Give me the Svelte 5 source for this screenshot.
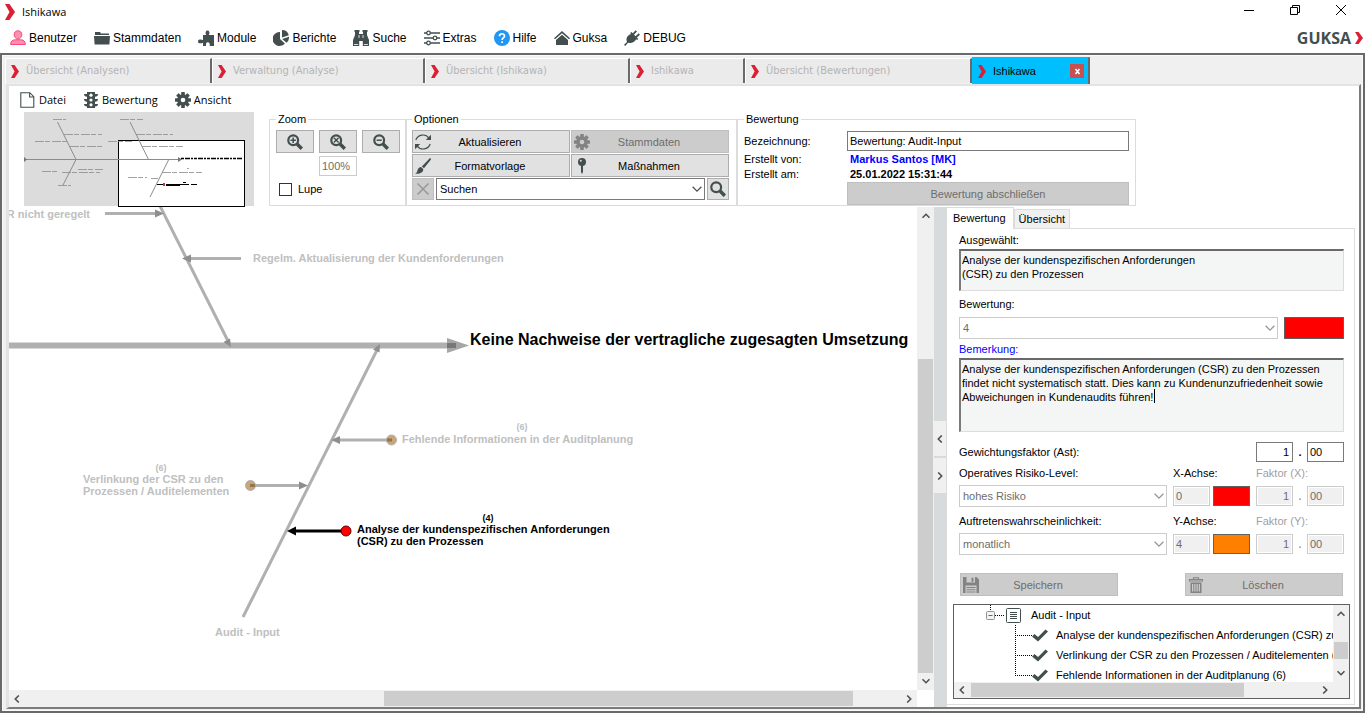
<script>
  const mainMenu = [
    { icon: 'user', label: 'Benutzer' },
    { icon: 'folder', label: 'Stammdaten' },
    { icon: 'puzzle', label: 'Module' },
    { icon: 'pie', label: 'Berichte' },
    { icon: 'binoculars', label: 'Suche' },
    { icon: 'sliders', label: 'Extras' },
    { icon: 'help', label: 'Hilfe' },
    { icon: 'house', label: 'Guksa' },
    { icon: 'plug', label: 'DEBUG' }
  ];

  const tabs = [
    { label: 'Übersicht (Analysen)', width: 207 },
    { label: 'Verwaltung (Analyse)', width: 213 },
    { label: 'Übersicht (Ishikawa)', width: 205 },
    { label: 'Ishikawa', width: 115 },
    { label: 'Übersicht (Bewertungen)', width: 227 },
    { label: 'Ishikawa', width: 118, active: true }
  ];

  const pageMenu = [
    { icon: 'file', label: 'Datei' },
    { icon: 'traffic', label: 'Bewertung' },
    { icon: 'gear', label: 'Ansicht' }
  ];

  const axes = [
    { id: 'x', label: 'Operatives Risiko-Level:', level: 'hohes Risiko', axis: 'X-Achse:', value: '0', color: '#ff0000', factor: 'Faktor (X):' },
    { id: 'y', label: 'Auftretenswahrscheinlichkeit:', level: 'monatlich', axis: 'Y-Achse:', value: '4', color: '#ff8000', factor: 'Faktor (Y):' }
  ];

  const leaves = [
    'Analyse der kundenspezifischen Anforderungen (CSR) zu den Prozessen (4)',
    'Verlinkung der CSR zu den Prozessen / Auditelementen (6)',
    'Fehlende Informationen in der Auditplanung (6)'
  ];

  let name = $state('Bewertung: Audit-Input');
  let selected = $state('Analyse der kundenspezifischen Anforderungen\n(CSR) zu den Prozessen');
  let remark = $state('Analyse der kundenspezifischen Anforderungen (CSR) zu den Prozessen findet nicht systematisch statt. Dies kann zu Kundenunzufriedenheit sowie Abweichungen in Kundenaudits führen!');
</script>

{#snippet mark(w, h)}
  <svg width={w} height={h} viewBox="0 0 10 16" preserveAspectRatio="none" aria-hidden="true">
    <path d="M0 0H4.500L10 8 4.500 16H0L4.500 8Z" fill="#dc1f35" />
  </svg>
{/snippet}

{#snippet chevron(dir)}
  <svg class="chev" width="8" height="8" viewBox="0 0 8 8" aria-hidden="true">
    {#if dir === 'up'}<path d="M.5 5.800L4 2.300 7.500 5.800" />
    {:else if dir === 'down'}<path d="M.5 2.200L4 5.700 7.500 2.200" />
    {:else if dir === 'left'}<path d="M5.800 .5L2.300 4 5.800 7.500" />
    {:else}<path d="M2.200 .5L5.700 4 2.200 7.500" />{/if}
  </svg>
{/snippet}

{#snippet gearShape()}
  <g fill="currentColor">
    {#each [0, 45, 90, 135] as a}
      <rect x="6.200" y="0" width="3.600" height="16" rx=".6" transform="rotate({a} 8 8)" />
    {/each}
    <circle cx="8" cy="8" r="5.800" />
  </g>
  <circle cx="8" cy="8" r="2.300" fill="var(--hole, #fff)" />
{/snippet}

{#snippet icon(kind)}
  <svg class="icon" width="16" height="16" viewBox="0 0 16 16" aria-hidden="true">
    {#if kind === 'user'}
      <path d="M8 .8c2.300 0 3.800 1.600 3.800 3.800S10.200 9 8 9 4.200 7 4.200 4.600 5.700.8 8 .8ZM.6 14.500c0-3.400 2-4.700 5-4.700h4.800c3 0 5 1.300 5 4.700Z" fill="#ff8fae" stroke="#f8487c" />
    {:else if kind === 'folder'}
      <path d="M1 2h5l1 1.500h8V5H1ZM0 6h16l-.6 8.500H.6Z" fill="currentColor" />
    {:else if kind === 'puzzle'}
      <path d="M5 5h3.200C7 2.800 7.600.4 9.500.4s2.600 2.400 1.300 4.600H16v11h-4.400c.8-2-.5-3.700-1.800-3.700S7.400 14 8.200 16H5v-3.300C3 13.700 0 13.700 0 11.400S3 9 5 10.100Z" fill="currentColor" />
    {:else if kind === 'pie'}
      <path d="M7 2v7l4.900 4.500A7 7 0 1 1 7 2ZM9 0a7 7 0 0 1 6.800 5.200L9 7.500ZM9.200 9 16 6.800a7 7 0 0 1-2.500 6Z" fill="currentColor" />
    {:else if kind === 'binoculars'}
      <path d="M1.500 0h5v2H6v2h4V2h-.5V0h5v2H14v3l2 5v6H9.800v-5H6.200v5H0v-6l2-5V2h-.5Z" fill="currentColor" />
      <path d="M1 14.500h4.200M10.800 14.500H15M6 5v3M10 5v3" stroke="#fff" stroke-width=".8" />
    {:else if kind === 'sliders'}
      <path d="M0 3h16M0 8h16M0 13h16" stroke="currentColor" stroke-width="1.600" />
      <g fill="#fff" stroke="currentColor" stroke-width="1.300"><circle cx="4.500" cy="3" r="1.800" /><circle cx="11" cy="8" r="1.800" /><circle cx="4.500" cy="13" r="1.800" /></g>
    {:else if kind === 'help'}
      <circle cx="8" cy="8" r="8" fill="#2196f3" />
      <path d="M5.500 6.200C5.500 3 10.500 3 10.500 6c0 1.800-2.400 1.800-2.400 4M8.100 11.300v1.700" fill="none" stroke="#fff" stroke-width="1.700" />
    {:else if kind === 'house'}
      <path d="M0 8.200 8 1l8 7.200-1 1-7-6-7 6ZM8 4.800l6 5.200v5H2v-5Z" fill="currentColor" />
    {:else if kind === 'plug'}
      <path d="M0 14.800 3 12c-1.500-4 .6-6.600 4-8l-.8-1L7.500 2l6.800 7-1.300 1-.9-.8c-1.800 3.300-4.700 4.500-8 3.500L1.200 16Z" fill="currentColor" />
      <path d="M9 4.300 12.300.8M11.800 7.300 15.300 4" stroke="currentColor" stroke-width="1.800" />
    {:else if kind === 'file'}
      <path d="M.8.7h9l4 4v10.600H.8ZM9.600.7V5h4.200" fill="#fff" stroke="currentColor" stroke-width="1.100" />
    {:else if kind === 'traffic'}
      <path d="M4 0h8v2h3c0 1.700-1 2.500-3 2.800V7h3c0 1.700-1 2.500-3 2.800V12h3c0 1.500-1 2.300-3 2.500V16H4v-1.500c-2-.2-3-1-3-2.500h3V9.800C2 9.500 1 8.700 1 7h3V4.800C2 4.500 1 3.700 1 2h3Z" fill="currentColor" />
      <g fill="#fff"><circle cx="8" cy="3.200" r="1.600" /><circle cx="8" cy="8" r="1.600" /><circle cx="8" cy="12.800" r="1.600" /></g>
    {:else if kind === 'gear'}
      {@render gearShape()}
    {:else if kind === 'refresh'}
      <g fill="none" stroke="currentColor" stroke-width="1.200"><path d="M.8 6A7.500 7.500 0 0 1 14 4.200M15.200 10A7.500 7.500 0 0 1 2 11.800" /></g>
      <path d="M16 .8V6H10.800ZM0 15.200V10H5.200Z" fill="currentColor" />
    {:else if kind === 'brush'}
      <path d="M15 0c1.200.4 1.200 1 .6 2L9 10.200 6.800 8.400ZM6 9.100l2.200 1.900c.4 3-2.700 5.300-8.200 4.700 2-.7 2-1.800 2.600-3.700C3.100 10.300 4.300 9.300 6 9.100Z" fill="currentColor" />
    {:else if kind === 'pin'}
      <circle cx="8" cy="4" r="4" fill="currentColor" /><path d="M7 7h2v7l-1 2-1-2Z" fill="currentColor" /><circle cx="6.800" cy="2.700" r="1" fill="#d8dada" />
    {:else if kind === 'cross'}
      <path d="M2.500 2.500l11 11M13.500 2.500l-11 11" stroke="#999" stroke-width="1.600" />
    {:else if kind === 'save'}
      <path d="M0 0h13.500L16 2.500V16H0Z" fill="currentColor" /><path d="M3.500 0h8.500v5.500H3.500ZM2.500 8.500h11V16h-11Z" fill="#ccc" /><path d="M8.500.8h2v4h-2ZM3.500 10h9v1h-9ZM3.500 12.200h9v1h-9ZM3.500 14.400h9v1h-9Z" fill="currentColor" />
    {:else if kind === 'trash'}
      <path d="M1.500 2.500h13V4h-13ZM5.500 2.500V.7h5v1.800" fill="none" stroke="currentColor" stroke-width="1.100" /><path d="M2.500 5.500h11V16h-11Z" fill="currentColor" /><path d="M4.700 7v7.500M6.900 7v7.500M9.100 7v7.500M11.300 7v7.500" stroke="#ddd" stroke-width="1" />
    {:else}
      <circle cx="6.200" cy="6.200" r="4.900" fill="none" stroke="currentColor" stroke-width="2.200" />
      <path d="M9.800 9.800 14.800 14.800" stroke="currentColor" stroke-width="3.400" />
      {#if kind === 'plus'}<path d="M3.500 6.200h5.400M6.200 3.500v5.400" stroke="currentColor" stroke-width="1.500" />
      {:else if kind === 'fit'}<path d="M3.800 3.800l4.800 4.800M8.600 3.800l-4.800 4.800" stroke="currentColor" stroke-width="1.400" />
      {:else if kind === 'minus'}<path d="M3.600 6.200h5.200" stroke="currentColor" stroke-width="1.500" />{/if}
    {/if}
  </svg>
{/snippet}

<div class="app">
  <header class="titlebar">
    {@render mark(10, 16)}
    <h1>Ishikawa</h1>
    <div class="window-buttons">
      <button aria-label="Minimieren"><svg width="12" height="12"><path d="M1 6.500h10" /></svg></button>
      <button aria-label="Wiederherstellen"><svg width="12" height="12"><path d="M1.500 3.500h7v7h-7ZM3.500 3.500v-2h7v7h-2" /></svg></button>
      <button aria-label="Schließen"><svg width="12" height="12"><path d="M1 1l10 10M11 1L1 11" /></svg></button>
    </div>
  </header>

  <nav class="menu">
    {#each mainMenu as item}
      <button>{@render icon(item.icon)}{item.label}</button>
    {/each}
    <span class="brand">GUKSA {@render mark(8, 12)}</span>
  </nav>

  <main class="frame">
    <div class="tabs" role="tablist">
      {#each tabs as tab}
        <div class="tab" class:active={tab.active} style="width: {tab.width}px">
          <button role="tab" aria-selected={!!tab.active}>{@render mark(8, 13)}{tab.label}</button>
          {#if tab.active}<button class="close" aria-label="Tab schließen"><svg width="7" height="7" viewBox="0 0 7 7"><path d="M1.500 1l4 5M5.500 1l-4 5" stroke="#fff" stroke-width="1.600" /></svg></button>{/if}
        </div>
      {/each}
    </div>

    <div class="page">
      <nav class="menu page-menu">
        {#each pageMenu as item}
          <button>{@render icon(item.icon)}{item.label}</button>
        {/each}
      </nav>

      <div class="toolbar">
        <svg class="minimap" width="230" height="95" viewBox="0 0 230 95" role="img" aria-label="Navigator">
          <rect width="230" height="94" fill="#dcdcdc" />
          <rect x="94.500" y="28.500" width="126" height="66" fill="#fff" stroke="#000" />
          <g fill="none" stroke="#8c8c8c">
            <path d="M0 47.500H156M33.500 10 52 47.500 39 73M106 10l18.500 37.500M144.500 48 126 85" />
            <g stroke-dasharray="9 1 5 2" opacity=".8">
              <path d="M29 7.500h13M96 7.500h23M40 22.500h38M11 29.500h32M46 34.500h34M112 22.500h37M84 29.500h24M118 34.500h41M18 59.500h15M54 57.500h25M38 60.500h38M34 73.500h13M104 65.500h19M127 66.500h7M138 60.500h40M163 56.500h2" />
            </g>
          </g>
          <path d="M0 45l3 2.500L0 50ZM154 45l4 2.500-4 2.500Z" fill="#777" />
          <path d="M157 46.500h61" stroke="#000" stroke-width="1.300" stroke-dasharray="3 1 5 1 2 1" />
          <path d="M133 72.500h8M142 72.500h23M142 73.500h14M167 72.500h6" stroke="#000" stroke-width="1.200" />
          <path d="M159 70.500h3" stroke="#000" />
          <rect x="139" y="71" width="2" height="3" fill="#d03030" />
        </svg>

        <fieldset class="zoom">
          <legend>Zoom</legend>
          <div class="zoom-grid">
            <button class="btn" aria-label="Vergrößern">{@render icon('plus')}</button>
            <button class="btn" aria-label="Einpassen">{@render icon('fit')}</button>
            <button class="btn" aria-label="Verkleinern">{@render icon('minus')}</button>
            <input class="percent" aria-label="Zoomstufe" value="100%" disabled />
          </div>
          <label class="check"><input type="checkbox" />Lupe</label>
        </fieldset>

        <fieldset class="options">
          <legend>Optionen</legend>
          <div class="option-grid">
            <button class="btn">{@render icon('refresh')}<span>Aktualisieren</span></button>
            <button class="btn" disabled>{@render icon('gear')}<span>Stammdaten</span></button>
            <button class="btn">{@render icon('brush')}<span>Formatvorlage</span></button>
            <button class="btn">{@render icon('pin')}<span>Maßnahmen</span></button>
          </div>
          <div class="search">
            <button class="btn" aria-label="Suche leeren" disabled>{@render icon('cross')}</button>
            <div class="select"><select aria-label="Suchen"><option>Suchen</option></select>{@render chevron('down')}</div>
            <button class="btn" aria-label="Suche starten">{@render icon('search')}</button>
          </div>
        </fieldset>

        <fieldset class="rating">
          <legend>Bewertung</legend>
          <div class="rating-grid">
            <label for="name">Bezeichnung:</label>
            <input id="name" bind:value={name} />
            <span>Erstellt von:</span><strong class="blue">Markus Santos [MK]</strong>
            <span>Erstellt am:</span><strong>25.01.2022 15:31:44</strong>
            <button class="btn" disabled>Bewertung abschließen</button>
          </div>
        </fieldset>
      </div>

      <div class="work">
        <section class="canvas">
          <div class="view">
            <svg width="908" height="482" viewBox="9 207 908 482" role="img" aria-label="Ishikawa-Diagramm">
              <g stroke="#b0b0b0" stroke-width="3" fill="none">
                <path d="M9 345.500H456" stroke-width="6" />
                <path d="M160 206 229 343M243 617 378 348" />
                <path d="M105 213.500h52M188 258.500h53M338 440h52M251 485.500h50" />
              </g>
              <path d="M447 338l22 7.500-22 7.500Z" fill="#a6a6a6" />
              <path d="M447 343h9v5h-9Z" fill="#777" />
              <g fill="#8e8e8e">
                <path d="M155 209.500l9 4-9 4ZM191 254.500l-9 4 9 4ZM340 436l-9 4 9 4ZM299 481.500l9 4-9 4ZM231 347l-7.500-5 6.500-3.500ZM380 344l-7 5.500 6.500 3Z" />
              </g>
              <g stroke="#b0b0b0" fill="#c9a673"><circle cx="391.500" cy="440" r="5" /><circle cx="250.500" cy="485.500" r="5" /></g>
              <path d="M387 440h5M250 485.500h5" stroke="#8f7550" stroke-width="3" />
              <path d="M292 531h50" stroke="#000" stroke-width="3" />
              <path d="M296 526.500l-9 4.500 9 4.500Z" />
              <circle cx="346" cy="531" r="5" fill="#f00" stroke="#600" />
              <g class="muted">
                <text x="90" y="218" text-anchor="end">CSR nicht geregelt</text>
                <text x="253" y="262">Regelm. Aktualisierung der Kundenforderungen</text>
                <text x="402" y="443">Fehlende Informationen in der Auditplanung</text>
                <text x="83" y="483">Verlinkung der CSR zu den</text>
                <text x="83" y="495">Prozessen / Auditelementen</text>
                <text x="215" y="636">Audit - Input</text>
                <text class="score" x="522" y="430">(6)</text>
                <text class="score" x="161" y="471">(6)</text>
              </g>
              <text class="score" x="488" y="521">(4)</text>
              <text x="357" y="533">Analyse der kundenspezifischen Anforderungen</text>
              <text x="357" y="545">(CSR) zu den Prozessen</text>
              <text class="effect" x="470" y="345">Keine Nachweise der vertragliche zugesagten Umsetzung</text>
            </svg>
          </div>
          <div class="bar vertical">{@render chevron('up')}<i style="top: 31.5%; height: 65%"></i>{@render chevron('down')}</div>
          <div class="bar horizontal">{@render chevron('left')}<i style="left: 41.3%; width: 51.7%"></i>{@render chevron('right')}</div>
        </section>

        <div class="splitter">
          <button aria-label="Nach links">{@render chevron('left')}</button>
          <button aria-label="Nach rechts">{@render chevron('right')}</button>
        </div>

        <aside>
          <div class="side-tabs" role="tablist">
            <button role="tab" aria-selected="true">Bewertung</button>
            <button role="tab" aria-selected="false">Übersicht</button>
          </div>
          <div class="side">
            <form>
              <label for="selected">Ausgewählt:</label>
              <textarea id="selected" class="short" readonly bind:value={selected}></textarea>
              <label for="grade" class="spaced">Bewertung:</label>
              <div class="line">
                <div class="select"><select id="grade" disabled><option>4</option></select>{@render chevron('down')}</div>
                <span class="swatch wide" style="background: #ff0000"></span>
              </div>
              <label for="remark" class="blue">Bemerkung:</label>
              <div class="remark"><textarea id="remark" class="tall" bind:value={remark}></textarea><span class="caret"></span></div>
              <div class="line weight">
                <label for="weight">Gewichtungsfaktor (Ast):</label>
                <input id="weight" class="num right" value="1" /><b>.</b><input class="num" aria-label="Nachkommastellen" value="00" />
              </div>
              {#each axes as a}
                <div class="axis">
                  <label for="level-{a.id}">{a.label}</label>
                  <label for="axis-{a.id}">{a.axis}</label>
                  <label for="factor-{a.id}" class="off">{a.factor}</label>
                  <div class="select"><select id="level-{a.id}" disabled><option>{a.level}</option></select>{@render chevron('down')}</div>
                  <div class="pair"><input id="axis-{a.id}" class="num" value={a.value} disabled /><span class="swatch" style="background: {a.color}"></span></div>
                  <div class="pair"><input id="factor-{a.id}" class="num right" value="1" disabled /><b class="off">.</b><input class="num" aria-label="Nachkommastellen" value="00" disabled /></div>
                </div>
              {/each}
              <div class="actions">
                <button type="button" class="btn" disabled>{@render icon('save')}<span>Speichern</span></button>
                <button type="button" class="btn" disabled>{@render icon('trash')}<span>Löschen</span></button>
              </div>
            </form>

            <div class="tree">
              <ul>
                <li class="root">
                  <svg width="42" height="20" viewBox="0 0 42 20" aria-hidden="true">
                    <path d="M5.500 0v6M10 10.500h10" stroke="#000" stroke-dasharray="1 1" />
                    <rect x="1.500" y="6.500" width="8" height="8" rx="1" fill="#f2f5f8" stroke="#919191" /><path d="M3.500 10.500h4" stroke="#4b63a7" />
                    <rect x="21.500" y="3.500" width="14" height="14" rx="1" fill="#fff" stroke="#434f4f" /><path d="M25 7.500h7M25 9.500h7M25 11.500h7M25 13.500h7" stroke="#434f4f" />
                  </svg>Audit - Input
                </li>
                {#each leaves as leaf, i}
                  <li>
                    <svg width="36" height="20" viewBox="0 0 36 20" aria-hidden="true">
                      <path d={i === leaves.length - 1 ? 'M.5 0v10M0 10.500h18' : 'M.5 0v20M0 10.500h18'} stroke="#000" stroke-dasharray="1 1" />
                      <path d="M17 11.500l2.500-2.500 3.500 3L30.500 4.500 33 6.500 23 16.500Z" fill="#434f4f" />
                    </svg>{leaf}
                  </li>
                {/each}
              </ul>
              <div class="bar vertical">{@render chevron('up')}<i style="top: 48%; height: 22%"></i>{@render chevron('down')}</div>
              <div class="bar horizontal">{@render chevron('left')}<i style="left: 4.500%; width: 72%"></i>{@render chevron('right')}</div>
            </div>
          </div>
        </aside>
      </div>
    </div>
  </main>
</div>

<style>
  :global(body) { margin: 0; background: #fff; }
  .app, .app * { box-sizing: border-box; }
  .app { height: 100vh; min-height: 700px; display: flex; flex-direction: column; overflow: hidden; font: 11px/14px "Liberation Sans", Arial, sans-serif; color: #000; }
  button, input, select, textarea { font: inherit; color: inherit; margin: 0; border-radius: 0; }
  button { background: none; border: 0; padding: 0; }
  svg { display: block; flex: none; }
  .icon { color: #434f4f; }
  .chev path { fill: none; stroke: #505050; stroke-width: 1.6; }
  .blue { color: #00f; }
  .off { color: #a0a0a0; }

  .titlebar { flex: none; height: 24px; display: flex; align-items: center; gap: 7px; padding: 0 19px 0 5px; }
  h1 { margin: 0; font: 11px/16px "Open Sans", sans-serif; }
  .window-buttons { margin-left: auto; display: flex; gap: 34px; padding-bottom: 4px; }
  .window-buttons path { fill: none; stroke: #000; }

  .menu { flex: none; display: flex; align-items: center; gap: 17px; height: 28px; padding: 0 3px 0 10px; font-size: 12px; }
  .menu button { display: flex; align-items: center; gap: 3px; }
  .brand { margin-left: auto; display: flex; align-items: center; gap: 4px; font: 700 16px/18px "Open Sans", sans-serif; color: #434f4f; }

  .frame { flex: 1; min-height: 0; display: flex; flex-direction: column; margin: 1px 1px 0 0; padding: 2px 2px 2px 3px; border: 2px solid #696969; background: #f0f0f0; box-shadow: inset 0 0 0 1px #fafafa; }
  .tabs { flex: none; display: flex; height: 27px; }
  .tab { display: flex; align-items: center; height: 25px; margin-top: 1px; border-right: 2px solid #696969; background: #ebebeb; border-left: 1px solid #fff; border-top: 1px solid #fff; color: #b4b4b4; font: 11px/14px "DejaVu Sans Condensed", "DejaVu Sans", sans-serif; font-stretch: condensed; }
  .tab button { display: flex; align-items: center; gap: 7px; margin-left: 5px; }
  .tab.active { background: #00bfff; color: #000; height: 27px; margin-top: 0; border-left-color: #00bfff; border-top-color: #00bfff; font: 11px/14px "Liberation Sans", sans-serif; }
  .tab .close { justify-content: center; width: 14px; height: 14px; margin: 0 4px 0 auto; background: #c75050; }

  .page { flex: 1; min-height: 0; display: flex; flex-direction: column; margin-left: 1px; background: #fff; border: solid #e3e3e3; border-width: 2px 0 0 3px; border-right: 2px solid #7c7c7c; border-bottom: 2px solid #7c7c7c; }
  .page-menu { height: 26px; padding: 2px 0 0 11px; font: 11px/16px "Open Sans", sans-serif; }

  .toolbar { flex: none; display: flex; align-items: flex-start; height: 95px; padding-left: 15px; }
  .minimap { margin-right: 15px; }
  fieldset { min-width: 0; height: 94px; margin: 0; padding: 4px 6px 0; border: 1px solid #dcdcdc; }
  legend { padding: 0 2px; line-height: 14px; }
  .zoom { flex: 0 0 137px; }
  .options { flex: 0 0 331px; }
  .rating { flex: 0 1 399px; }
  .zoom-grid { display: grid; grid-template-columns: repeat(3, 38px); gap: 3px 5px; }
  .btn { display: flex; align-items: center; justify-content: center; height: 23px; padding: 0 2px; border: 1px solid #adadad; background: #e1e1e1; --hole: #e1e1e1; }
  .btn span { flex: 1; text-align: center; padding-right: 18px; }
  .btn:disabled { background: #ccc; border-color: #bfbfbf; color: #6d6d6d; --hole: #ccc; }
  .btn:disabled .icon { color: #838383; }
  input { min-width: 0; border: 1px solid #7a7a7a; background: #fff; padding: 0 2px; }
  input:disabled { border-color: #ccc; color: #6d6d6d; }
  .percent { grid-column: 2; height: 20px; }
  .check { display: flex; align-items: center; gap: 6px; margin: 6px 0 0 3px; }
  .check input { appearance: none; width: 13px; height: 13px; border: 1px solid #333; margin: 0; }
  .options { padding: 4px 7px 0 5px; }
  .option-grid { display: grid; grid-template-columns: 1fr 1fr; gap: 1px; }
  .search { display: flex; gap: 2px; margin-top: 1px; }
  .search .btn { width: 22px; height: 22px; }
  .select { position: relative; flex: 1; min-width: 0; }
  .select select { appearance: none; display: block; width: 100%; height: 22px; padding: 0 20px 0 3px; border: 1px solid #7a7a7a; background: #fff; opacity: 1; }
  .select select:disabled { border-color: #ccc; color: #6d6d6d; }
  .select .chev { position: absolute; right: 3px; top: 6px; width: 10px; height: 10px; pointer-events: none; }
  .select .chev path { stroke-width: 1; }
  select:disabled + .chev { opacity: .6; }
  .rating-grid { display: grid; grid-template-columns: 103px 1fr; grid-template-rows: 22px 14px 16px 23px; align-items: center; }
  .rating-grid input { height: 20px; }
  .rating-grid strong { padding-left: 3px; }
  .rating-grid .btn { grid-column: 2; }

  .work { flex: 1; min-height: 0; display: flex; }
  .canvas { flex: 1; min-width: 0; display: grid; grid-template: minmax(0, 1fr) 17px / minmax(0, 1fr) 17px; }
  .view { overflow: hidden; }
  .view text { font-size: 11px; font-weight: 700; }
  .view .muted text { fill: #c0c0c0; }
  .view text.score { font-size: 9px; text-anchor: middle; }
  .view text.effect { font-size: 16px; }
  .bar { position: relative; display: flex; align-items: center; justify-content: space-between; background: #f0f0f0; }
  .bar i { position: absolute; background: #cdcdcd; }
  .vertical { flex-direction: column; padding: 5px 0; }
  .vertical i { left: 1px; right: 1px; }
  .horizontal { padding: 0 4px; }
  .horizontal i { top: 1px; bottom: 1px; }

  .splitter { flex: 0 0 12px; display: flex; flex-direction: column; justify-content: center; gap: 2px; background: #d7dbdb; }
  .splitter button { display: grid; place-items: center; height: 35px; background: #f0f0f0; }
  aside { flex: 0 0 413px; display: flex; flex-direction: column; padding: 0 4px 2px 0; border-left: 1px solid #dcdcdc; }
  .side-tabs { display: flex; align-items: flex-end; height: 21px; flex: none; }
  .side-tabs button { height: 19px; padding: 0 4px; background: #f0f0f0; border: 1px solid #dcdcdc; border-bottom: 0; }
  .side-tabs [aria-selected="true"] { height: 22px; margin-bottom: -1px; padding: 0 7px 2px 6px; background: #fff; border-left: 0; z-index: 1; }
  .side { flex: 1; min-height: 0; border: 1px solid #dcdcdc; border-left: 0; padding: 4px 4px 5px 6px; display: flex; flex-direction: column; }
  form { flex: 1; padding: 0 6px; }
  form label { display: block; line-height: 14px; }
  textarea { display: block; width: 100%; margin-top: 2px; padding: 2px 2px 2px 1px; resize: none; border: 1px solid #dcdcdc; border-top: 2px solid #696969; border-left: 2px solid #7a7a7a; background: #f4f6f6; outline: 0; overflow: hidden; line-height: 14px; }
  .short { height: 42px; }
  .tall { height: 74px; }
  .remark { position: relative; }
  .caret { position: absolute; left: 195px; top: 31px; width: 1px; height: 14px; background: #000; }
  .spaced { margin: 6px 0; }
  .line { display: flex; gap: 6px; }
  .line + label { margin-top: 3px; }
  .swatch { flex: none; width: 37px; height: 20px; border: 1px solid #606060; }
  .wide { width: 60px; height: 22px; }
  .num { width: 37px; height: 20px; }
  .num:disabled { background: #f0f0f0; box-shadow: inset 0 0 0 1px #fff; }
  .right { text-align: right; padding-right: 3px; }
  .weight { gap: 0; align-items: center; margin: 10px 0 4px; }
  .weight label { flex: 1; }
  .weight b, .pair b { width: 14px; text-align: center; }
  .axis { display: grid; grid-template-columns: minmax(0, 1fr) 77px 88px; gap: 5px 6px; margin-bottom: 7px; }
  .pair { display: flex; justify-content: space-between; align-items: center; }
  .actions { display: flex; justify-content: space-between; padding: 11px 1px 0 1px; }
  .actions .btn { width: 158px; }

  .tree { flex: none; height: 95px; display: grid; grid-template: minmax(0, 1fr) 16px / minmax(0, 1fr) 16px; border: 1px solid #606060; }
  .tree::after { content: ""; background: #f0f0f0; }
  ul { margin: 0; padding: 0; list-style: none; overflow: hidden; }
  li { display: flex; align-items: center; height: 20px; padding-left: 61px; gap: 5px; white-space: nowrap; }
  .root { padding-left: 31px; gap: 4px; }
</style>
